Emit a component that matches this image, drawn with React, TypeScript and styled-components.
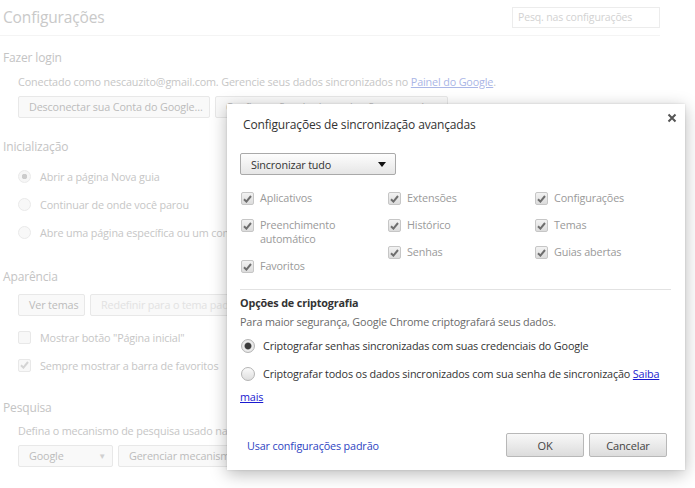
import React from 'react'
import styled, { createGlobalStyle } from 'styled-components'

const GlobalStyle = createGlobalStyle`
  html, body { margin: 0; padding: 0; background: #fff; }
  body {
    font-family: "Open Sans", "Noto Sans", sans-serif;
    font-size: 10.8px;
    letter-spacing: -0.15px;
  }
`

const Page = styled.div`
  position: relative;
  width: 695px;
  height: 488px;
  overflow: hidden;
  background: #fff;
  color: #c6c6c6;
`

const Header = styled.header`
  display: flex;
  justify-content: space-between;
  align-items: flex-start;
  width: 660px;
  height: 35px;
  border-bottom: 1px solid #f4f4f4;
`

const Title = styled.h1`
  margin: 6px 0 0 3px;
  font-size: 15.5px;
  font-weight: 400;
  line-height: 22px;
  color: #c9c9c9;
`

const Search = styled.div`
  margin-top: 7px;
  width: 141px;
  height: 19px;
  padding-left: 5px;
  border: 1px solid #ececec;
  font-size: 10.5px;
  line-height: 19px;
  color: #d2d2d2;
`

const Section = styled.section<{ $top: number }>`
  margin-top: ${p => p.$top}px;
`

const Heading = styled.h2`
  margin: 0 0 0 3px;
  font-size: 12px;
  font-weight: 400;
  line-height: 20px;
  color: #c4c4c4;
`

const Indent = styled.div<{ $top?: number }>`
  margin: ${p => p.$top ?? 0}px 0 0 18px;
  line-height: 16px;
  white-space: nowrap;
`

const FadedLink = styled.span`
  color: #aab6e6;
  text-decoration: underline;
`

const Buttons = styled.div<{ $top: number }>`
  display: flex;
  gap: 5px;
  margin: ${p => p.$top}px 0 0 18px;
`

const FadedButton = styled.div<{ $w?: number; $dim?: boolean }>`
  box-sizing: border-box;
  flex: none;
  width: ${p => (p.$w ? `${p.$w}px` : 'auto')};
  height: 22px;
  padding: 0 10px;
  border: 1px solid #e8e8e8;
  border-radius: 2px;
  background: #f9f9f9;
  color: ${p => (p.$dim ? '#e2e2e2' : '#bcbcbc')};
  line-height: 20px;
  text-align: center;
  white-space: nowrap;
`

const FadedSelect = styled(FadedButton)`
  display: flex;
  justify-content: space-between;
  padding: 0 6px 0 10px;
  text-align: left;
`

const OptionRow = styled.div`
  display: flex;
  align-items: center;
  gap: 9px;
  height: 28px;
  margin-left: 18px;
  white-space: nowrap;
`

const FadedRadio = styled.span<{ $on?: boolean }>`
  box-sizing: border-box;
  width: 13px;
  height: 13px;
  border-radius: 50%;
  border: 1px solid #eaeaea;
  background: ${p =>
    p.$on ? 'radial-gradient(circle, #cccccc 0 2.5px, #f6f6f6 3px)' : '#f8f8f8'};
`

const FadedBox = styled.span`
  box-sizing: border-box;
  display: inline-flex;
  align-items: center;
  justify-content: center;
  width: 13px;
  height: 13px;
  border-radius: 2px;
  border: 1px solid #e8e8e8;
  background: #f8f8f8;
`

/* dialog */

const Dialog = styled.div`
  position: absolute;
  left: 227px;
  top: 104px;
  box-sizing: border-box;
  width: 458px;
  height: 366px;
  display: flex;
  flex-direction: column;
  padding: 13px 14px 13px 13px;
  background: #fff;
  box-shadow: 0 4px 16px rgba(0, 0, 0, 0.28), 0 0 2px rgba(0, 0, 0, 0.12);
  color: #333;
`

const DialogTitle = styled.div`
  padding-left: 3px;
  font-size: 12px;
  line-height: 16px;
  color: #333;
`

const Close = styled.div`
  position: absolute;
  right: 8px;
  top: 7px;
  width: 10px;
  height: 10px;
`

const SyncSelect = styled.div`
  box-sizing: border-box;
  display: flex;
  align-items: center;
  justify-content: space-between;
  width: 156px;
  height: 22px;
  margin-top: 20px;
  padding: 0 9px 0 10px;
  border: 1px solid #a9a9a9;
  border-radius: 2px;
  background: linear-gradient(#fdfdfd, #e6e6e6);
  color: #333;
`

const Caret = styled.span`
  width: 0;
  height: 0;
  border-left: 4px solid transparent;
  border-right: 4px solid transparent;
  border-top: 5px solid #111;
`

const Grid = styled.div`
  display: flex;
  margin-top: 16px;
`

const Column = styled.div`
  display: flex;
  flex: none;
  flex-direction: column;
  gap: 13px;
  width: 147px;
`

const Check = styled.label`
  display: flex;
  align-items: flex-start;
  gap: 6px;
  padding-left: 1px;
  line-height: 14px;
  color: #9a9a9a;
`

const Box = styled.span`
  box-sizing: border-box;
  flex: none;
  display: inline-flex;
  align-items: center;
  justify-content: center;
  width: 13px;
  height: 13px;
  margin-top: 1px;
  border: 1px solid #c6c6c6;
  border-radius: 2px;
  background: linear-gradient(#f2f2f2, #dcdcdc);
`

const Divider = styled.hr`
  margin: 16px 0 0;
  border: 0;
  border-top: 1px solid #e2e2e2;
`

const Bold = styled.div`
  margin-top: 6px;
  font-weight: 700;
  line-height: 14px;
  color: #333;
`

const Note = styled.div`
  margin-top: 5px;
  line-height: 14px;
  color: #6a6a6a;
`

const Radios = styled.div`
  display: flex;
  flex-direction: column;
  gap: 5px;
  margin-top: 5px;
`

const RadioLine = styled.div`
  line-height: 23px;
  color: #333;
`

const Radio = styled.span<{ $on?: boolean }>`
  box-sizing: border-box;
  display: inline-block;
  width: 14px;
  height: 14px;
  margin: 0 8px 0 1px;
  vertical-align: -3px;
  border-radius: 50%;
  border: 1px solid #b4b4b4;
  background: ${p =>
    p.$on
      ? 'radial-gradient(circle, #3a3a3a 0 2.8px, #777 3.2px, #eee 4px, #d8d8d8 100%)'
      : 'linear-gradient(#fafafa, #dedede)'};
`

const Link = styled.a`
  color: #1a1ad0;
  text-decoration: underline;
`

const Footer = styled.div`
  display: flex;
  align-items: center;
  justify-content: space-between;
  margin-top: auto;
  padding: 0 4px 0 7px;
`

const FooterLink = styled.a`
  color: #2e44c2;
  text-decoration: none;
`

const ButtonRow = styled.div`
  display: flex;
  gap: 5px;
`

const Button = styled.button`
  box-sizing: border-box;
  width: 78px;
  height: 24px;
  border: 1px solid #b8b8b8;
  border-radius: 2px;
  background: linear-gradient(#f8f8f8, #dcdcdc);
  font-family: inherit;
  font-size: 11px;
  letter-spacing: inherit;
  color: #444;
`

const Tick = ({ color }: { color: string }) => (
  <svg width="9" height="8" viewBox="0 0 9 8">
    <path d="M1 4.2 L3.4 6.6 L8 1" fill="none" stroke={color} strokeWidth="2" />
  </svg>
)

const CheckItem = ({ children }: { children: React.ReactNode }) => (
  <Check>
    <Box>
      <Tick color="#6e6e6e" />
    </Box>
    <span>{children}</span>
  </Check>
)

export default function App() {
  return (
    <Page>
      <GlobalStyle />
      <Header>
        <Title>Configurações</Title>
        <Search>Pesq. nas configurações</Search>
      </Header>

      <Section $top={12}>
        <Heading>Fazer login</Heading>
        <Indent $top={6}>
          Conectado como nescauzito@gmail.com. Gerencie seus dados sincronizados no{' '}
          <FadedLink>Painel do Google</FadedLink>.
        </Indent>
        <Buttons $top={6}>
          <FadedButton $w={192}>Desconectar sua Conta do Google...</FadedButton>
          <FadedButton $w={233}>Configurações de sincronização avançadas...</FadedButton>
        </Buttons>
      </Section>

      <Section $top={19}>
        <Heading>Inicialização</Heading>
        <div style={{ height: 5 }} />
        <OptionRow>
          <FadedRadio $on />
          Abrir a página Nova guia
        </OptionRow>
        <OptionRow>
          <FadedRadio />
          Continuar de onde você parou
        </OptionRow>
        <OptionRow>
          <FadedRadio />
          Abre uma página específica ou um conjunto de páginas.
        </OptionRow>
      </Section>

      <Section $top={21}>
        <Heading>Aparência</Heading>
        <Buttons $top={7}>
          <FadedButton $w={67}>Ver temas</FadedButton>
          <FadedButton $dim>Redefinir para o tema padrão</FadedButton>
        </Buttons>
        <div style={{ height: 7 }} />
        <OptionRow>
          <FadedBox />
          Mostrar botão "Página inicial"
        </OptionRow>
        <OptionRow>
          <FadedBox>
            <Tick color="#d4d4d4" />
          </FadedBox>
          Sempre mostrar a barra de favoritos
        </OptionRow>
      </Section>

      <Section $top={19}>
        <Heading>Pesquisa</Heading>
        <Indent $top={5}>Defina o mecanismo de pesquisa usado na pesquisa da omnibox.</Indent>
        <Buttons $top={6}>
          <FadedSelect $w={95}>
            Google
            <span style={{ color: '#d0d0d0', fontSize: 8 }}>▼</span>
          </FadedSelect>
          <FadedButton>Gerenciar mecanismos de pesquisa...</FadedButton>
        </Buttons>
      </Section>

      <Dialog>
        <DialogTitle>Configurações de sincronização avançadas</DialogTitle>
        <Close>
          <svg width="10" height="10" viewBox="0 0 10 10">
            <path d="M1.5 1.5 L8.5 8.5 M8.5 1.5 L1.5 8.5" stroke="#555" strokeWidth="2" />
          </svg>
        </Close>

        <SyncSelect>
          Sincronizar tudo
          <Caret />
        </SyncSelect>

        <Grid>
          <Column>
            <CheckItem>Aplicativos</CheckItem>
            <CheckItem>
              Preenchimento
              <br />
              automático
            </CheckItem>
            <CheckItem>Favoritos</CheckItem>
          </Column>
          <Column>
            <CheckItem>Extensões</CheckItem>
            <CheckItem>Histórico</CheckItem>
            <CheckItem>Senhas</CheckItem>
          </Column>
          <Column>
            <CheckItem>Configurações</CheckItem>
            <CheckItem>Temas</CheckItem>
            <CheckItem>Guias abertas</CheckItem>
          </Column>
        </Grid>

        <Divider />
        <Bold>Opções de criptografia</Bold>
        <Note>Para maior segurança, Google Chrome criptografará seus dados.</Note>

        <Radios>
          <RadioLine>
            <Radio $on />
            Criptografar senhas sincronizadas com suas credenciais do Google
          </RadioLine>
          <RadioLine>
            <Radio />
            Criptografar todos os dados sincronizados com sua senha de sincronização{' '}
            <Link href="#">Saiba mais</Link>
          </RadioLine>
        </Radios>

        <Footer>
          <FooterLink href="#">Usar configurações padrão</FooterLink>
          <ButtonRow>
            <Button>OK</Button>
            <Button>Cancelar</Button>
          </ButtonRow>
        </Footer>
      </Dialog>
    </Page>
  )
}
